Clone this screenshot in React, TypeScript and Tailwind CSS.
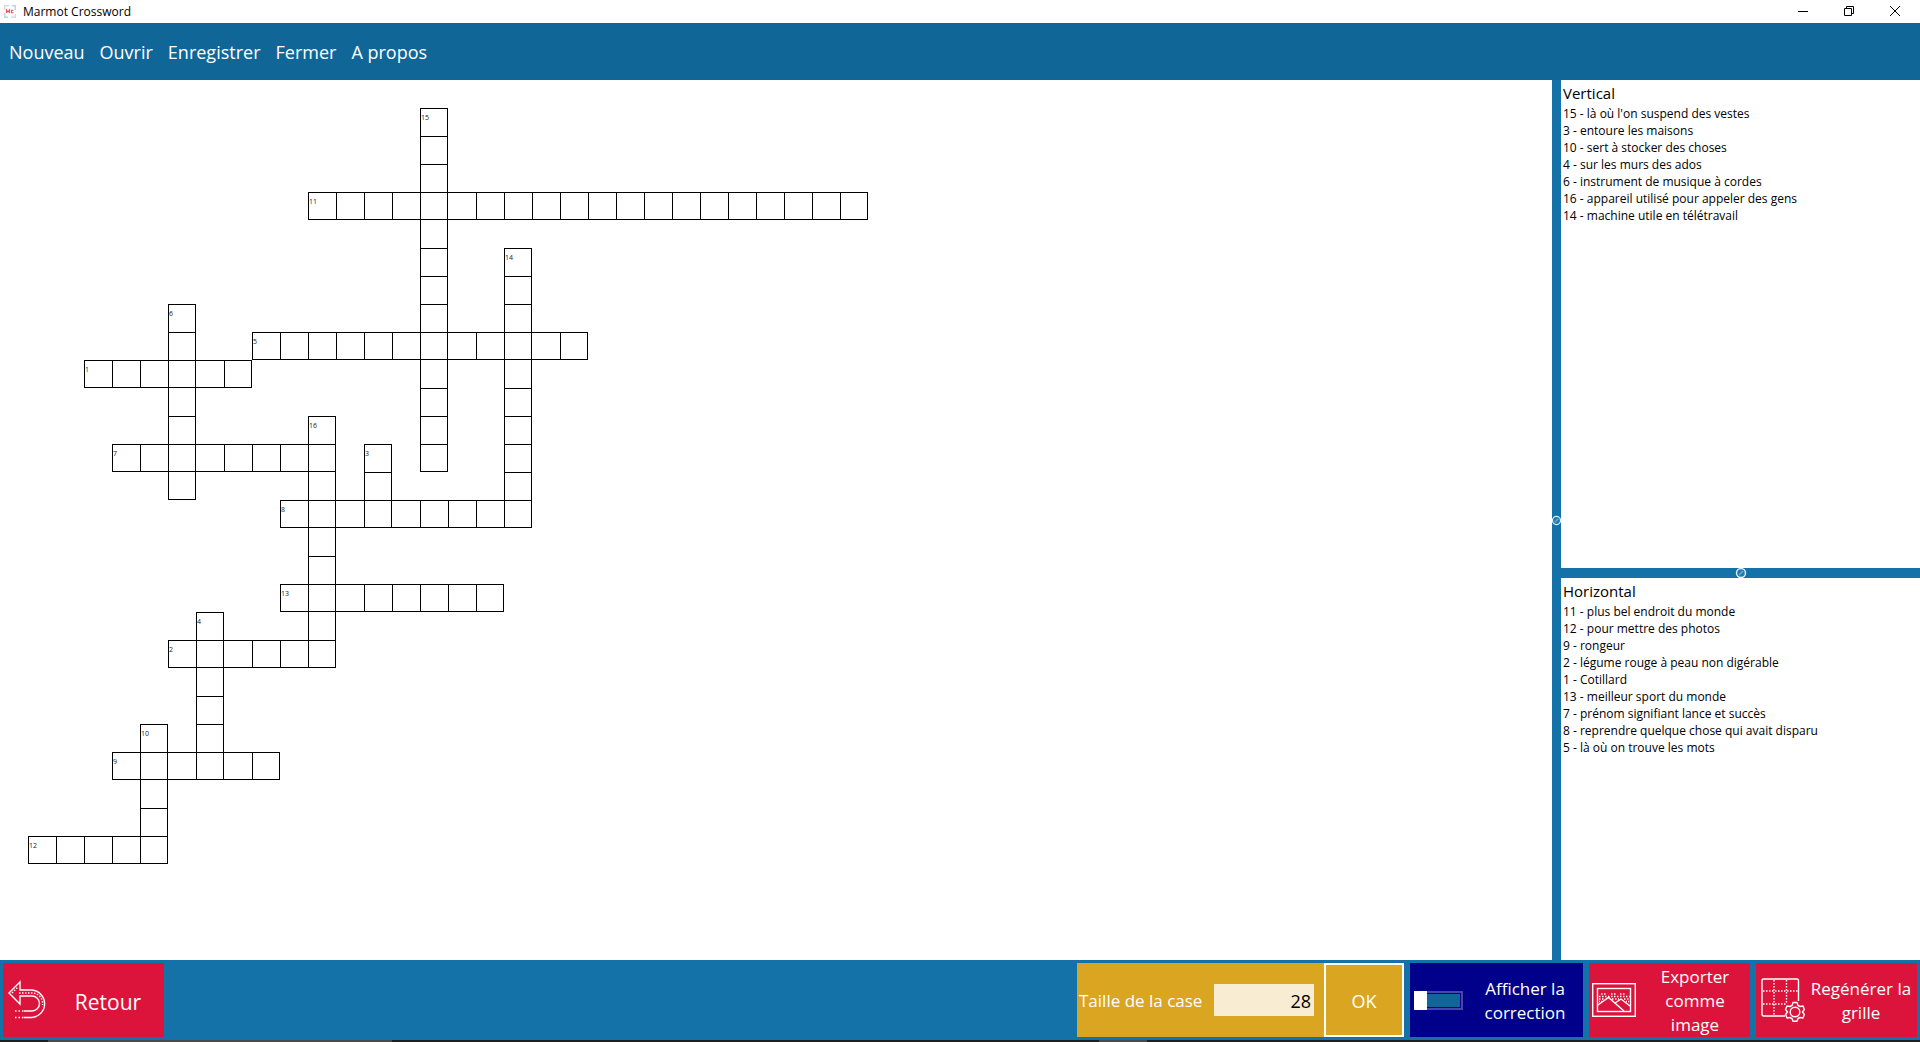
import React from "react";

type Word = { n: number; col: number; row: number; len: number; dir: "h" | "v" };

const words: Word[] = [
  { n: 15, col: 15, row: 1, len: 13, dir: "v" },
  { n: 11, col: 11, row: 4, len: 20, dir: "h" },
  { n: 14, col: 18, row: 6, len: 10, dir: "v" },
  { n: 6, col: 6, row: 8, len: 7, dir: "v" },
  { n: 5, col: 9, row: 9, len: 12, dir: "h" },
  { n: 1, col: 3, row: 10, len: 6, dir: "h" },
  { n: 16, col: 11, row: 12, len: 9, dir: "v" },
  { n: 7, col: 4, row: 13, len: 8, dir: "h" },
  { n: 3, col: 13, row: 13, len: 3, dir: "v" },
  { n: 8, col: 10, row: 15, len: 9, dir: "h" },
  { n: 13, col: 10, row: 18, len: 8, dir: "h" },
  { n: 4, col: 7, row: 19, len: 6, dir: "v" },
  { n: 2, col: 6, row: 20, len: 6, dir: "h" },
  { n: 10, col: 5, row: 23, len: 5, dir: "v" },
  { n: 9, col: 4, row: 24, len: 6, dir: "h" },
  { n: 12, col: 1, row: 27, len: 5, dir: "h" },
];

type Cell = { col: number; row: number; n?: number; h: boolean; v: boolean };

const cells = new Map<string, Cell>();
for (const w of words) {
  for (let i = 0; i < w.len; i++) {
    const col = w.col + (w.dir === "h" ? i : 0);
    const row = w.row + (w.dir === "v" ? i : 0);
    const key = `${col},${row}`;
    const cell = cells.get(key) ?? { col, row, h: false, v: false };
    cell[w.dir] = true;
    if (i === 0) cell.n = w.n;
    cells.set(key, cell);
  }
}

// Neighbouring cells share a single line: a cell draws its left/top edge only
// when the previous one has not already closed it.
const closesRight = (c: Cell) => c.v || !cells.has(`${c.col + 1},${c.row}`);
const closesBottom = (c: Cell) => c.h || !cells.has(`${c.col},${c.row + 1}`);

function edges(c: Cell) {
  const left = cells.get(`${c.col - 1},${c.row}`);
  const up = cells.get(`${c.col},${c.row - 1}`);
  return [
    closesRight(c) ? "border-r" : "",
    closesBottom(c) ? "border-b" : "",
    !left || !closesRight(left) ? "border-l" : "",
    !up || !closesBottom(up) ? "border-t" : "",
  ].join(" ");
}

const vertical = [
  "15 - là où l'on suspend des vestes",
  "3 - entoure les maisons",
  "10 - sert à stocker des choses",
  "4 - sur les murs des ados",
  "6 - instrument de musique à cordes",
  "16 - appareil utilisé pour appeler des gens",
  "14 - machine utile en télétravail",
];

const horizontal = [
  "11 - plus bel endroit du monde",
  "12 - pour mettre des photos",
  "9 - rongeur",
  "2 - légume rouge à peau non digérable",
  "1 - Cotillard",
  "13 - meilleur sport du monde",
  "7 - prénom signifiant lance et succès",
  "8 - reprendre quelque chose qui avait disparu",
  "5 - là où on trouve les mots",
];

function Clues({ title, items }: { title: string; items: string[] }) {
  return (
    <section className="min-h-0 flex-1 overflow-hidden bg-white px-0.5 pt-[3px] text-black">
      <h2 className="text-[15px] leading-5">{title}</h2>
      <ul className="pt-0.5 text-[12px] leading-[17px]">
        {items.map((t) => (
          <li key={t} className="whitespace-nowrap">{t}</li>
        ))}
      </ul>
    </section>
  );
}

function Grip({ size }: { size: number }) {
  return (
    <svg width={size} height={size} viewBox="0 0 10 10" className="shrink-0 overflow-visible">
      <circle cx="5" cy="5" r="4.5" fill="#1f7ab0" stroke="#e3eff6" strokeWidth="1.4" />
      <path d="M3 7 7 3" stroke="#6aa8cc" strokeWidth="1.6" />
    </svg>
  );
}

function BackIcon() {
  return (
    <svg width="40" height="40" viewBox="0 0 40 40" fill="none" stroke="white" strokeWidth="1.4" className="shrink-0">
      <path d="M16 37.500H24A13.800 13.800 0 0 0 24 10H12V2L1 13L12 24V16H24A7.500 7.500 0 0 1 24 31H16" />
      <path d="M11 13H24A10.500 10.500 0 0 1 34.500 25M4 13L9.500 7.500" strokeDasharray="1.500 1.500" />
      <path d="M7 31H16M7 37.500H16" strokeDasharray="1.500 2" />
    </svg>
  );
}

function PictureIcon() {
  return (
    <svg width="44" height="34" viewBox="0 0 44 34" fill="none" stroke="white" strokeWidth="1.4" className="shrink-0">
      <rect x="0.7" y="0.7" width="42.600" height="32.600" />
      <rect x="5.500" y="5.500" width="33" height="23" />
      <path d="M6 22L16.500 14.500L32 28M23 20L29 16L38 23" />
      <path d="M9 11H15M19 11H24M28 11H34M7 13.500H38M7 16H13M20 16H27M32 16H38" strokeDasharray="1.500 1.500" />
      <path d="M7 18.500H10M34 18.500H37" strokeDasharray="1 1" />
    </svg>
  );
}

function GridGearIcon() {
  return (
    <svg width="44" height="44" viewBox="0 0 44 44" fill="none" stroke="white" strokeWidth="1.400" className="shrink-0">
      <path d="M24 38H2.500A1.500 1.500 0 0 1 1 36.500V2.500A1.500 1.500 0 0 1 2.500 1H36A1.500 1.500 0 0 1 37.500 2.500V23" />
      <path d="M13 2V38M25.500 2V26M2 13H37M2 26H25" strokeDasharray="1.500 1.500" />
      <circle cx="34" cy="34" r="4.800" />
      <path
        strokeLinejoin="round"
        d="M32 24.500H36L37 27.500L39 28.500L42 28L43.300 31.500L41.500 34L43.300 36.500L42 40L39 39.500L37 40.500L36 43.300H32L31 40.500L29 39.500L26 40L24.500 36.500L26.500 34L24.500 31.500L26 28L29 28.500L31 27.500Z"
      />
    </svg>
  );
}

const redButton = "flex w-[161px] items-center bg-[#dc143c] text-white";

export default function App() {
  return (
    <div className="flex h-screen flex-col overflow-hidden bg-white font-['Open_Sans','Noto_Sans',sans-serif]">
      <header className="flex h-[23px] shrink-0 items-center bg-white pr-0.5 text-black">
        <svg width="12" height="13" viewBox="0 0 12 13" className="ml-1" fill="none">
          <path d="M5 .7H.7V4.500M7 12.300H11.300V9" stroke="#d8dadb" strokeWidth="1.400" />
          <path d="M8 .7H11.300V5M4 12.300H.7V8" stroke="#b5d8e4" strokeWidth="1.400" />
          <path d="M2.500 8V5L4 7L5.500 5V8M9.500 5.300H7.500V7.700H9.500" stroke="#e0555f" strokeWidth="1.100" />
        </svg>
        <h1 className="ml-[7px] text-[12px] leading-4">Marmot Crossword</h1>
        <div className="ml-auto flex h-full pb-0.5">
          <button aria-label="Réduire" className="flex w-[46px] items-center justify-center">
            <svg width="10" height="10" stroke="black"><path d="M0 5.500H10" /></svg>
          </button>
          <button aria-label="Restaurer" className="flex w-[46px] items-center justify-center">
            <svg width="10" height="10" stroke="black" fill="none"><path d="M.5 2.500H7.500V9.500H.5ZM2.500 2V.5H9.500V7.500H8" /></svg>
          </button>
          <button aria-label="Quitter" className="flex w-[46px] items-center justify-center">
            <svg width="10" height="10" stroke="black"><path d="M0 0 10 10M10 0 0 10" /></svg>
          </button>
        </div>
      </header>

      <nav className="flex h-[57px] shrink-0 items-center gap-[15px] bg-[#116698] px-[9px] pt-0.5 text-[18px] text-white">
        <button>Nouveau</button>
        <button>Ouvrir</button>
        <button>Enregistrer</button>
        <button>Fermer</button>
        <button>A propos</button>
      </nav>

      <main className="flex min-h-0 flex-1">
        <div className="min-w-0 flex-1 overflow-hidden bg-white p-7">
          <div className="grid auto-cols-[28px] auto-rows-[28px]">
            {[...cells.values()].map((c) => (
              <div
                key={`${c.col},${c.row}`}
                className={`border-black pt-1 text-[7px] leading-[10px] text-[#222] ${edges(c)}`}
                style={{ gridColumn: c.col, gridRow: c.row }}
              >
                {c.n}
              </div>
            ))}
          </div>
        </div>
        <div className="flex w-[9px] shrink-0 items-center justify-center bg-[#1472a9]">
          <Grip size={9} />
        </div>
        <aside className="flex w-[359px] shrink-0 flex-col">
          <div className="flex h-[488px] shrink-0 flex-col">
            <Clues title="Vertical" items={vertical} />
          </div>
          <div className="flex h-[10px] shrink-0 items-center justify-center bg-[#1472a9]">
            <Grip size={10} />
          </div>
          <Clues title="Horizontal" items={horizontal} />
        </aside>
      </main>

      <footer className="flex h-20 shrink-0 gap-1.5 bg-[#1472a9] p-[3px] text-center text-[17px] leading-6 text-white">
        <button className={`${redButton} mr-auto pl-[5px]`}>
          <BackIcon />
          <span className="flex-1 pt-1 pl-1 text-[21px]">Retour</span>
        </button>
        <div className="flex bg-[#daa520]">
          <label htmlFor="size" className="w-[137px] self-center whitespace-nowrap pl-0.5 pt-0.5 text-left">Taille de la case</label>
          <input
            id="size"
            defaultValue="28"
            className="h-8 w-[100px] self-center bg-[#f8ecd2] px-[3px] pt-0.5 text-right text-[18px] text-black outline-none"
          />
          <button className="ml-2.5 w-20 border-2 border-white pt-0.5 text-[18px]">OK</button>
        </div>
        <label className="flex w-[173px] items-center bg-[#00008b] pl-1">
          <input type="checkbox" role="switch" className="peer sr-only" />
          <span className="flex h-[19px] w-[49px] shrink-0 border-2 border-[#4747a8] bg-[#116698] shadow-[inset_0_0_0_1px_#00008b]">
            <span className="-my-0.5 -ml-0.5 w-[13px] bg-white" />
          </span>
          <span className="w-[110px] shrink-0 pl-[14px] pt-0.5">Afficher la correction</span>
        </label>
        <button className={`${redButton} pl-[3px]`}>
          <PictureIcon />
          <span className="flex-1 pl-4 pr-3 pt-0.5">Exporter comme image</span>
        </button>
        <button className={`${redButton} pl-[5px]`}>
          <GridGearIcon />
          <span className="flex-1 pt-0.5">Regénérer la grille</span>
        </button>
      </footer>
      <div className="flex h-0.5 shrink-0 bg-[#1f1f1f]">
        <div className="ml-12 w-[344px] bg-[#4a4a4a]" />
        <div className="ml-[707px] w-12 bg-[#4a4a4a]" />
      </div>
    </div>
  );
}
